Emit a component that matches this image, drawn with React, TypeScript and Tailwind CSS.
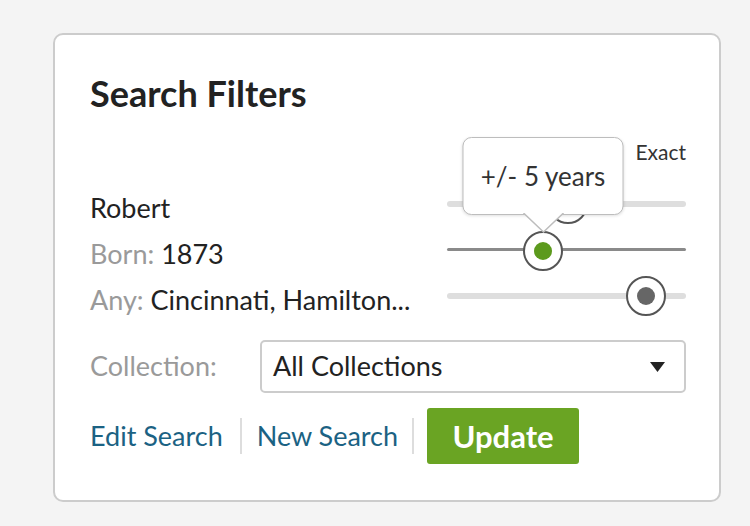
import type { ReactNode } from "react";

const FONT = "font-['Lato','Noto_Sans',sans-serif]";

type SliderProps = {
  value: number;
  track: "light" | "dark";
  dot: string;
  children?: ReactNode;
};

const Slider = ({ value, track, dot, children }: SliderProps) => (
  <div className="relative flex h-[46px] w-[239px] items-center">
    <div
      className={
        track === "dark"
          ? "mb-[8px] h-[3px] w-full rounded-full bg-[#8a8a8a]"
          : "mb-[6px] h-[6px] w-full rounded-full bg-[#dedede]"
      }
    />
    <div
      className="absolute top-1/2 flex size-[40px] -translate-x-1/2 -translate-y-1/2 items-center justify-center rounded-full border-2 border-[#555] bg-white"
      style={{ left: `${value}%`, marginTop: track === "dark" ? -2 : -3 }}
    >
      <div className={`size-[18px] rounded-full ${dot}`} />
      {children}
    </div>
  </div>
);

const Tooltip = ({ label }: { label: string }) => (
  <div className="absolute bottom-full left-1/2 mb-[-1px] flex -translate-x-1/2 flex-col items-center">
    <div className="flex h-[78px] w-[161px] items-center justify-center rounded-[9px] border-[1.5px] border-[#bdbdbd] bg-white text-[26px] text-[#333] shadow-[0_1px_3px_rgba(0,0,0,0.12)]">
      {label}
    </div>
    <svg width="42" height="21" viewBox="0 0 42 21" className="-mt-[2px]">
      <path d="M1 0 L21 19 L41 0" fill="#fff" stroke="#bdbdbd" strokeWidth="1.5" />
    </svg>
  </div>
);

const Row = ({ children, slider }: { children: ReactNode; slider: ReactNode }) => (
  <div className="flex h-[46px] items-center justify-between">
    <div className="text-[27px] leading-none text-[#222]">{children}</div>
    {slider}
  </div>
);

export default function App() {
  return (
    <div className={`h-[526px] w-[750px] overflow-hidden bg-[#f4f4f4] pl-[53px] pt-[33px] ${FONT}`}>
      <div className="h-[469px] w-[668px] rounded-[10px] border-2 border-[#cccccc] bg-white pl-[35px] pr-[33px] pt-[41px]">
        <h2 className="text-[36px] font-bold leading-[35px] text-[#222]">Search Filters</h2>

        <div className="mt-[21px] flex h-[40px] items-center justify-end">
          <span className="text-[21px] text-[#333]">Exact</span>
        </div>

        <div className="mt-[12px]">
          <Row slider={<Slider value={50.6} track="light" dot="bg-[#666]" />}>Robert</Row>
          <Row
            slider={
              <Slider value={40.2} track="dark" dot="bg-[#5c9a1d]">
                <Tooltip label="+/- 5 years" />
              </Slider>
            }
          >
            <span className="text-[#9a9a9a]">Born:</span> 1873
          </Row>
          <Row slider={<Slider value={83.3} track="light" dot="bg-[#666]" />}>
            <span className="text-[#9a9a9a]">Any:</span> Cincinnati, Hamilton...
          </Row>
        </div>

        <div className="mt-[18px] flex items-center">
          <span className="w-[170px] text-[27px] text-[#9a9a9a]">Collection:</span>
          <div className="flex h-[53px] flex-1 items-center justify-between rounded-[5px] border-2 border-[#cccccc] pl-[11px] pr-[19px]">
            <span className="text-[27px] text-[#222]">All Collections</span>
            <svg width="15" height="10" viewBox="0 0 15 10">
              <path d="M0 0 H15 L7.5 10 Z" fill="#222" />
            </svg>
          </div>
        </div>

        <div className="mt-[15px] flex items-center">
          <a className="text-[27px] text-[#1b6283]">Edit Search</a>
          <div className="ml-[17px] mr-[15px] h-[36px] w-[2px] bg-[#dddddd]" />
          <a className="text-[27px] text-[#1b6283]">New Search</a>
          <div className="ml-[14px] mr-[13px] h-[36px] w-[2px] bg-[#dddddd]" />
          <button className="flex h-[56px] w-[152px] items-center justify-center rounded-[3px] bg-[#6aa423] text-[31px] font-bold text-white">
            Update
          </button>
        </div>
      </div>
    </div>
  );
}
